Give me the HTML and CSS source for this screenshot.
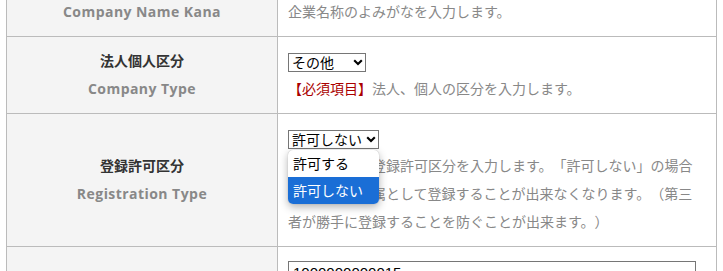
FILE: index.html
```html
<!DOCTYPE html>
<html lang="ja">
<head>
<meta charset="utf-8">
<title>企業情報登録</title>
<link rel="stylesheet" href="styles.css">
</head>
<body>
<table class="form">
  <colgroup><col class="col-head"><col class="col-body"></colgroup>
  <tr>
    <th><div class="jp">企業名称カナ</div><div class="en">Company Name Kana</div></th>
    <td>
      <div class="field"><input class="text" type="text" value=""></div>
      <div class="desc">企業名称のよみがなを入力します。</div>
    </td>
  </tr>
  <tr>
    <th><div class="jp">法人個人区分</div><div class="en">Company Type</div></th>
    <td>
      <div class="field">
        <span class="sel sel-type">
          <select><option>その他</option><option>法人</option><option>個人</option></select>
          <svg class="chev" viewBox="0 0 10 7" width="10" height="7"><path d="M1.2 1.2 L5 5 L8.8 1.2" fill="none" stroke="#000" stroke-width="2.1"/></svg>
        </span>
      </div>
      <div class="desc"><span class="req">【必須項目】</span>法人、個人の区分を入力します。</div>
    </td>
  </tr>
  <tr>
    <th><div class="jp">登録許可区分</div><div class="en">Registration Type</div></th>
    <td>
      <div class="field">
        <span class="sel sel-reg">
          <select><option>許可する</option><option selected>許可しない</option></select>
          <svg class="chev" viewBox="0 0 10 7" width="10" height="7"><path d="M1.2 1.2 L5 5 L8.8 1.2" fill="none" stroke="#000" stroke-width="2.1"/></svg>
          <ul class="popup">
            <li>許可する</li>
            <li class="active">許可しない</li>
          </ul>
        </span>
      </div>
      <div class="desc"><span class="req">【必須項目】</span>登録許可区分を入力します。「許可しない」の場合は、他社が所属として登録することが出来なくなります。（第三者が勝手に登録することを防ぐことが出来ます。）</div>
    </td>
  </tr>
  <tr>
    <th><div class="jp">法人番号</div><div class="en">Corporate Number</div></th>
    <td>
      <div class="field"><input class="text" type="text" value="1000000000015"></div>
      <div class="desc">国税庁が指定する13桁の法人番号を入力します。法人番号が無い場合は空欄のままにしてください。</div>
    </td>
  </tr>
</table>
</body>
</html>
```
FILE: styles.css
```css
html, body {
  margin: 0;
  padding: 0;
  background: #fff;
}
body {
  font-family: "Open Sans", "Noto Sans CJK JP", sans-serif;
  font-size: 14px;
  color: #333;
  text-spacing-trim: space-all;
}
.form {
  border-collapse: collapse;
  table-layout: fixed;
  width: 711px;
  margin: -41px 0 0 6px;
}
.col-head { width: 271px; }
.form th, .form td {
  border: 1px solid #bbb;
  padding: 10px;
  line-height: 28px;
}
.form th {
  background: #f4f4f4;
  text-align: center;
  vertical-align: middle;
  font-weight: bold;
}
.form td {
  vertical-align: top;
  background: #fff;
}
.jp { color: #333; }
.en {
  color: #888;
  letter-spacing: 0.45px;
}
.desc { color: #888; }
.req { color: #a00; }
.field { height: 28px; }
.sel {
  position: relative;
  display: inline-block;
  vertical-align: middle;
}
.sel select {
  -webkit-appearance: none;
  appearance: none;
  display: block;
  height: 19px;
  margin: 0;
  padding: 0 0 0 3px;
  border: 1px solid #767676;
  border-radius: 0;
  background: #fff;
  color: #000;
  font-family: "Noto Sans CJK JP", sans-serif;
  font-size: 14px;
  line-height: 17px;
}
.sel-type select { width: 78px; }
.sel-reg select { width: 91px; }
.chev {
  position: absolute;
  right: 3px;
  top: 6px;
  pointer-events: none;
}
.popup {
  position: absolute;
  left: 0;
  top: 20px;
  width: 91px;
  margin: 0;
  padding: 0;
  list-style: none;
  background: #fff;
  border-radius: 5px;
  box-shadow: 0 3px 8px rgba(0, 0, 0, 0.3), 0 0 1px rgba(0, 0, 0, 0.3);
  overflow: hidden;
  z-index: 2;
}
.popup li {
  height: 27px;
  line-height: 27px;
  padding: 0 5px;
  color: #000;
  font-family: "Noto Sans CJK JP", sans-serif;
  font-size: 14px;
  white-space: nowrap;
}
.popup li.active {
  background: #1a6ed6;
  color: #fff;
}
.text {
  width: 408px;
  height: 22px;
  box-sizing: border-box;
  margin: 0;
  padding: 1px 4px;
  border: 1px solid #767676;
  font-family: "Liberation Sans", sans-serif;
  font-size: 15px;
  color: #000;
  vertical-align: middle;
}
```
